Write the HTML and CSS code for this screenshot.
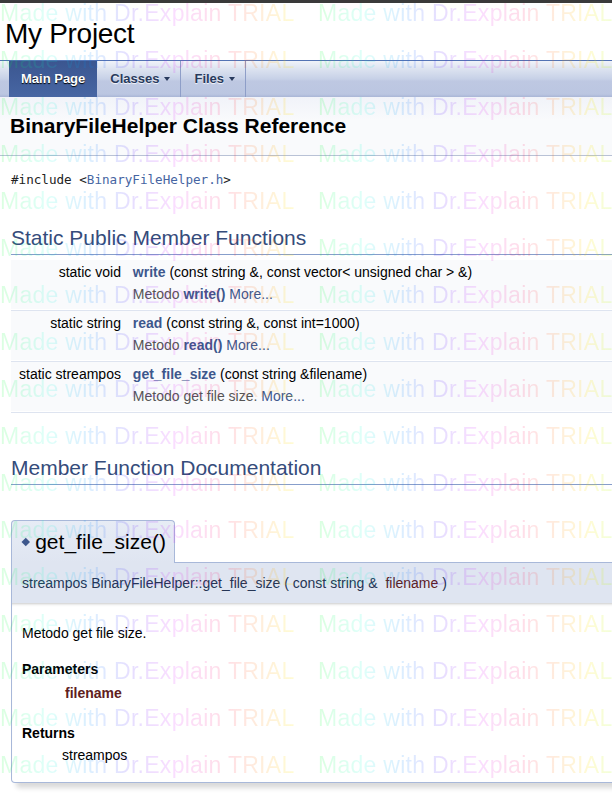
FILE: index.html
```html
<!DOCTYPE html>
<html lang="en">
<head>
<meta charset="utf-8">
<title>My Project: BinaryFileHelper Class Reference</title>
<link rel="stylesheet" href="styles.css">
</head>
<body>
<div class="topbar"></div>
<div class="titlearea"><div class="projectname">My Project</div></div>
<nav class="navbar">
  <ul class="menu">
    <li class="menu-item current"><a href="#">Main Page</a></li>
    <li class="menu-item sub"><a href="#">Classes<span class="caret"></span></a></li>
    <li class="menu-item sub"><a href="#">Files<span class="caret"></span></a></li>
  </ul>
</nav>
<div class="header"><div class="title">BinaryFileHelper Class Reference</div></div>
<div class="contents">
  <p class="include"><code>#include &lt;<a class="code-link" href="#">BinaryFileHelper.h</a>&gt;</code></p>
  <h2 class="groupheader first">Static Public Member Functions</h2>
  <table class="memberdecls">
    <tr><td class="mem-left">static void&nbsp;</td><td class="mem-right"><a class="el" href="#">write</a> (const string &amp;, const vector&lt; unsigned char &gt; &amp;)</td></tr>
    <tr><td class="mdesc-left">&nbsp;</td><td class="mdesc-right">Metodo <a class="el" href="#">write()</a> <a class="more" href="#">More...</a></td></tr>
    <tr><td class="sep" colspan="2"></td></tr>
    <tr><td class="mem-left">static string&nbsp;</td><td class="mem-right"><a class="el" href="#">read</a> (const string &amp;, const int=1000)</td></tr>
    <tr><td class="mdesc-left">&nbsp;</td><td class="mdesc-right">Metodo <a class="el" href="#">read()</a> <a class="more" href="#">More...</a></td></tr>
    <tr><td class="sep" colspan="2"></td></tr>
    <tr><td class="mem-left">static streampos&nbsp;</td><td class="mem-right"><a class="el" href="#">get_file_size</a> (const string &amp;filename)</td></tr>
    <tr><td class="mdesc-left">&nbsp;</td><td class="mdesc-right">Metodo get file size. <a class="more" href="#">More...</a></td></tr>
    <tr><td class="sep" colspan="2"></td></tr>
  </table>
  <h2 class="groupheader second">Member Function Documentation</h2>
  <div class="memitem">
    <h2 class="memtitle"><span class="permalink"></span>get_file_size()</h2>
    <div class="memproto">streampos BinaryFileHelper::get_file_size ( const string &amp;&nbsp; <span class="paramname">filename</span> )</div>
    <div class="memdoc">
      <p class="brief">Metodo get file size.</p>
      <dl class="params">
        <dt>Parameters</dt>
        <dd><div class="param-cell">filename</div></dd>
      </dl>
      <dl class="returns">
        <dt>Returns</dt>
        <dd>streampos</dd>
      </dl>
    </div>
  </div>
</div>

<div class="watermark" aria-hidden="true">
  <div class="wm-row"><span class="wm">Made with Dr.Explain TRIAL</span><span class="wm">Made with Dr.Explain TRIAL</span></div>
  <div class="wm-row"><span class="wm">Made with Dr.Explain TRIAL</span><span class="wm">Made with Dr.Explain TRIAL</span></div>
  <div class="wm-row"><span class="wm">Made with Dr.Explain TRIAL</span><span class="wm">Made with Dr.Explain TRIAL</span></div>
  <div class="wm-row"><span class="wm">Made with Dr.Explain TRIAL</span><span class="wm">Made with Dr.Explain TRIAL</span></div>
  <div class="wm-row"><span class="wm">Made with Dr.Explain TRIAL</span><span class="wm">Made with Dr.Explain TRIAL</span></div>
  <div class="wm-row"><span class="wm">Made with Dr.Explain TRIAL</span><span class="wm">Made with Dr.Explain TRIAL</span></div>
  <div class="wm-row"><span class="wm">Made with Dr.Explain TRIAL</span><span class="wm">Made with Dr.Explain TRIAL</span></div>
  <div class="wm-row"><span class="wm">Made with Dr.Explain TRIAL</span><span class="wm">Made with Dr.Explain TRIAL</span></div>
  <div class="wm-row"><span class="wm">Made with Dr.Explain TRIAL</span><span class="wm">Made with Dr.Explain TRIAL</span></div>
  <div class="wm-row"><span class="wm">Made with Dr.Explain TRIAL</span><span class="wm">Made with Dr.Explain TRIAL</span></div>
  <div class="wm-row"><span class="wm">Made with Dr.Explain TRIAL</span><span class="wm">Made with Dr.Explain TRIAL</span></div>
  <div class="wm-row"><span class="wm">Made with Dr.Explain TRIAL</span><span class="wm">Made with Dr.Explain TRIAL</span></div>
  <div class="wm-row"><span class="wm">Made with Dr.Explain TRIAL</span><span class="wm">Made with Dr.Explain TRIAL</span></div>
  <div class="wm-row"><span class="wm">Made with Dr.Explain TRIAL</span><span class="wm">Made with Dr.Explain TRIAL</span></div>
  <div class="wm-row"><span class="wm">Made with Dr.Explain TRIAL</span><span class="wm">Made with Dr.Explain TRIAL</span></div>
  <div class="wm-row"><span class="wm">Made with Dr.Explain TRIAL</span><span class="wm">Made with Dr.Explain TRIAL</span></div>
  <div class="wm-row"><span class="wm">Made with Dr.Explain TRIAL</span><span class="wm">Made with Dr.Explain TRIAL</span></div>
</div>
</body>
</html>
```

FILE: styles.css
```css
html, body {
  margin: 0;
  padding: 0;
}
html {
  overflow: hidden;
}
body {
  position: relative;
  font-family: "Liberation Sans", Arial, sans-serif;
  font-size: 14px;
  line-height: 22px;
  color: #000;
  background: #fff;
  min-height: 794px;
}

.topbar {
  height: 3px;
  background: #3a3a3a;
}

.titlearea {
  height: 57px;
  padding-left: 5px;
  border-bottom: 1px solid #5373B4;
}
.projectname {
  padding-top: 15px;
  font-size: 28px;
  line-height: 32px;
  letter-spacing: -0.3px;
}

.navbar {
  height: 36px;
  background: linear-gradient(to bottom, #f0f3f9 0%, #dae1ef 25%, #c7d1e7 50%, #bec8e2 56%, #bbc6e1 92%, #a9b6d6 100%);
}
.menu {
  list-style: none;
  margin: 0;
  padding: 0 0 0 9px;
  display: flex;
  height: 36px;
}
.menu-item a {
  display: flex;
  align-items: center;
  height: 36px;
  padding: 0 12px;
  font-family: "Liberation Sans", Arial, sans-serif;
  font-weight: bold;
  font-size: 13px;
  color: #283A5D;
  text-decoration: none;
  text-shadow: 0 1px 1px rgba(255, 255, 255, 0.9);
}
.menu-item.current a {
  background: linear-gradient(to bottom, #3b5690, #4766a3);
  color: #fff;
  text-shadow: 0 1px 1px #000;
}
.menu-item.sub a {
  padding: 0 10px 0 13px;
  border-right: 1px solid #8e9ec8;
}
.caret {
  width: 0;
  height: 0;
  margin-left: 5px;
  border-left: 3.5px solid transparent;
  border-right: 3.5px solid transparent;
  border-top: 4px solid #283A5D;
}

.header {
  padding: 15px 0 15px 10px;
  background: linear-gradient(to bottom, #f1f3f9, #f9fafc 40%);
  border-bottom: 1px solid #b9c2d6;
}
.title {
  font-weight: bold;
  font-size: 21px;
  line-height: 28px;
}

.contents {
  padding-left: 11px;
}
.include {
  margin: 12px 0 0;
  line-height: 22px;
}
.include code {
  font-family: "DejaVu Sans Mono", monospace;
  font-size: 12.6px;
  color: #222;
}
.code-link {
  color: #4665A2;
  text-decoration: none;
}

.groupheader {
  margin: 27px 0 0;
  padding: 8px 0 4px;
  border-bottom: 1px solid #879ECB;
  color: #354C7B;
  font-size: 21px;
  line-height: 24px;
  font-weight: normal;
}
.groupheader.second {
  margin-top: 35px;
}

.memberdecls {
  width: 100%;
  margin-top: 5px;
  border-spacing: 0;
}
.memberdecls td {
  background: #F9FAFC;
  line-height: 22px;
  vertical-align: top;
}
.mem-left {
  padding: 1px 0 0 8px;
  text-align: right;
  white-space: nowrap;
}
.mem-right {
  padding: 1px 0 0 8px;
  width: 100%;
}
.mdesc-left {
  padding: 0 0 4px 8px;
}
.mdesc-right {
  padding: 0 8px 4px 8px;
  color: #555;
}
.memberdecls td.sep {
  height: 1px;
  padding: 0;
  line-height: 1px;
  font-size: 1px;
  background: #fff;
  border-bottom: 1px solid #DEE4F0;
}
a.el {
  color: #3D578C;
  font-weight: bold;
  text-decoration: none;
}
a.more {
  color: #3D578C;
  text-decoration: none;
}

.memitem {
  margin: 35px -40px 0 0;
}
.memtitle {
  position: relative;
  z-index: 1;
  width: fit-content;
  margin: 0 0 -1px;
  padding: 8px;
  border: 1px solid #A8B8D9;
  border-bottom: none;
  border-radius: 4px 4px 0 0;
  background: linear-gradient(to bottom, #e7ecf5, #dfe5f1);
  font-size: 21px;
  line-height: 26px;
  font-weight: normal;
  color: #000;
}
.permalink {
  display: inline-block;
  width: 5.5px;
  height: 5.5px;
  margin: 0 6.6px 0 3.1px;
  vertical-align: 4.2px;
  background: #3D578C;
  transform: rotate(45deg);
}
.memproto {
  padding: 6px 0 6px 10px;
  border: 1px solid #A8B8D9;
  border-bottom: none;
  border-top-right-radius: 4px;
  background: #DFE5F1;
  color: #253555;
  line-height: 28px;
  white-space: nowrap;
}
.paramname {
  color: #602020;
}
.memdoc {
  padding: 6px 10px 2px;
  border: 1px solid #A8B8D9;
  border-top: none;
  border-radius: 0 0 4px 4px;
  background: #fff;
  box-shadow: inset 0 3px 3px -2px rgba(0, 0, 0, 0.22), 5px 5px 5px rgba(0, 0, 0, 0.15);
}
.brief {
  margin: 13px 0 14px;
}
.memdoc dl {
  margin: 0;
}
.memdoc dt {
  font-weight: bold;
}
.memdoc dd {
  margin-left: 40px;
}
.params {
  margin-bottom: 16px !important;
}
.returns {
  margin-bottom: 14px !important;
}
.param-cell {
  padding: 2px 3px;
  font-weight: bold;
  color: #602020;
}

.watermark {
  position: absolute;
  top: -10.5px;
  left: 0;
  width: 100%;
  height: 820px;
  overflow: hidden;
  pointer-events: none;
  z-index: 10;
}
.wm-row {
  display: grid;
  grid-template-columns: 318px max-content;
  height: 47px;
  line-height: 47px;
  white-space: nowrap;
}
.wm {
  font-family: "Liberation Sans", Arial, sans-serif;
  font-size: 23px;
  letter-spacing: 0.28px;
  color: transparent;
  background: linear-gradient(to right,
    rgba(0, 255, 40, 0.14) 0%,
    rgba(0, 255, 210, 0.13) 15%,
    rgba(0, 140, 255, 0.14) 28%,
    rgba(70, 0, 255, 0.13) 42%,
    rgba(220, 0, 255, 0.13) 55%,
    rgba(255, 0, 80, 0.13) 70%,
    rgba(255, 130, 0, 0.14) 82%,
    rgba(255, 230, 0, 0.17) 92%,
    rgba(170, 255, 0, 0.15) 100%);
  -webkit-background-clip: text;
  background-clip: text;
}
```
